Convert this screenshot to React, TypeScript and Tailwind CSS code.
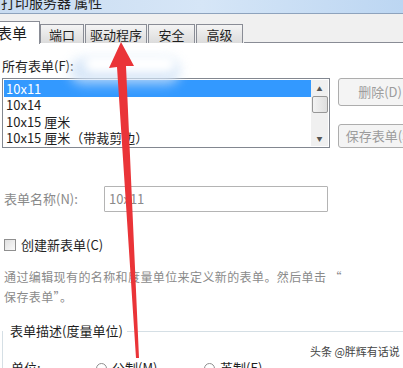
import React from "react";

const forms = ["10x11", "10x14", "10x15 厘米", "10x15 厘米（带裁剪边）"];

const tabs = [
  { name: "端口", w: "w-[44px]" },
  { name: "驱动程序", w: "w-[62px]" },
  { name: "安全", w: "w-[47px]" },
  { name: "高级", w: "w-[47px]" },
];

export default function App() {
  return (
    <div
      className="relative w-[403px] h-[368px] overflow-hidden bg-white text-[13px] text-[#1e1e1e]"
      style={{ fontFamily: '"Noto Sans CJK SC", "Liberation Sans", sans-serif' }}
    >
      {/* title bar, top half cut off */}
      <div className="h-[14px] overflow-hidden bg-gradient-to-r from-[#c9dcf1] via-[#d6e6f7] to-[#bcd6f2] border-b border-[#8ea3bd]">
        <div className="-mt-[7px] pl-[1px] text-[14px] leading-[18px] text-[#222]">打印服务器 属性</div>
      </div>

      {/* tab strip */}
      <div className="h-[29px] bg-[#f0f0f0] flex items-end">
        <div className="h-[23px] w-[40px] bg-white border-r border-t border-[#898c95] -mb-[1px] z-10 flex items-center text-[15px]">
          <span className="-ml-[3px]">表单</span>
        </div>
        {tabs.map((t) => (
          <div
            key={t.name}
            className={`${t.w} h-[19px] mr-[1px] border border-b-0 border-[#898c95] bg-gradient-to-b from-[#f4f4f4] to-[#dcdcdc] flex items-center justify-center text-[13px] leading-none`}
          >
            {t.name}
          </div>
        ))}
        <div className="flex-1 border-b border-[#898c95]" />
      </div>

      {/* panel */}
      <div className="pl-[2px] pt-[15px]">
        <div className="leading-[16px] mb-[4px]">所有表单(F):</div>
        <div className="flex items-start">
          <div className="w-[328px] h-[70px] shrink-0 border border-[#828790] flex p-[1px]">
            <div className="flex-1 flex flex-col">
              {forms.map((f, i) => (
                <div
                  key={f}
                  className={`h-[17px] pl-[2px] flex items-center leading-none ${i === 0 ? "bg-[#3399ff] text-white" : ""}`}
                >
                  {f}
                </div>
              ))}
            </div>
            <div className="w-[17px] bg-[#f0f0f0] flex flex-col items-center">
              <div className="h-[16px] flex items-center justify-center text-[6px] text-[#555]">▲</div>
              <div className="w-[16px] h-[17px] border border-[#979797] rounded-[2px] bg-gradient-to-r from-[#f3f3f3] to-[#dedede]" />
              <div className="flex-1" />
              <div className="h-[16px] flex items-center justify-center text-[6px] text-[#555]">▼</div>
            </div>
          </div>
          <div className="ml-[8px] flex flex-col gap-[18px] shrink-0">
            <div className="w-[84px] h-[28px] rounded-[3px] border border-[#adadad] bg-[#f4f4f4] flex items-center justify-center text-[#9c9c9c] whitespace-nowrap">
              删除(D)
            </div>
            <div className="w-[84px] h-[24px] rounded-[3px] border border-[#adadad] bg-[#f4f4f4] flex items-center justify-center text-[#9c9c9c] whitespace-nowrap">
              保存表单(S)
            </div>
          </div>
        </div>

        <div className="flex items-center mt-[38px] pl-[2px]">
          <div className="w-[100px] text-[#8a8a8a]">表单名称(N):</div>
          <div className="w-[224px] h-[26px] border border-[#b4b4b4] rounded-[1px] pl-[4px] flex items-center text-[#8a8a8a]">
            10x11
          </div>
        </div>

        <div className="flex items-center mt-[25px] pl-[2px] h-[16px]">
          <div className="w-[12px] h-[12px] border border-[#8f8f8f] bg-gradient-to-br from-[#e0e0e0] to-[#fafafa] mr-[5px]" />
          <span>创建新表单(C)</span>
        </div>

        <div className="mt-[14px] pl-[2px] leading-[20px] text-[12px] tracking-[0.4px] text-[#8a8a8a] whitespace-nowrap">
          <div>通过编辑现有的名称和度量单位来定义新的表单。然后单击 “</div>
          <div>保存表单”。</div>
        </div>

        <div className="mt-[16px] flex items-center h-[16px]">
          <span className="pl-[8px] pr-[4px] whitespace-nowrap">表单描述(度量单位)</span>
          <div className="flex-1 border-t border-[#d5dfe5]" />
        </div>
        <div className="border-l border-[#d5dfe5] h-[44px] -mt-[8px] pt-[30px] pl-[8px] flex items-center text-[13px]">
          <span className="w-[85px]">单位:</span>
          <span className="w-[11px] h-[11px] rounded-full border border-[#8f8f8f] mr-[5px]" />
          <span className="w-[92px]">公制(M)</span>
          <span className="w-[11px] h-[11px] rounded-full border border-[#8f8f8f] mr-[5px]" />
          <span>英制(E)</span>
        </div>
      </div>

      {/* blurred smear next to label */}
      <div className="absolute left-[70px] top-[58px] w-[110px] h-[26px] rounded-full bg-[#cfe2f7] blur-[6px] opacity-80" />
      <div className="absolute left-[85px] top-[56px] w-[90px] h-[16px] rounded-full bg-white blur-[4px]" />

      {/* watermark */}
      <div className="absolute left-[310px] top-[344px] text-[11px] leading-[14px] text-[#444] whitespace-nowrap bg-white/70">
        头条 @胖辉有话说
      </div>

      {/* red arrow */}
      <svg className="absolute left-0 top-0" width="403" height="368" viewBox="0 0 403 368">
        <polygon
          points="121,42 109,68 117,67 136,358 139,358 126,66 134,66"
          fill="#ea3438"
        />
      </svg>
    </div>
  );
}
